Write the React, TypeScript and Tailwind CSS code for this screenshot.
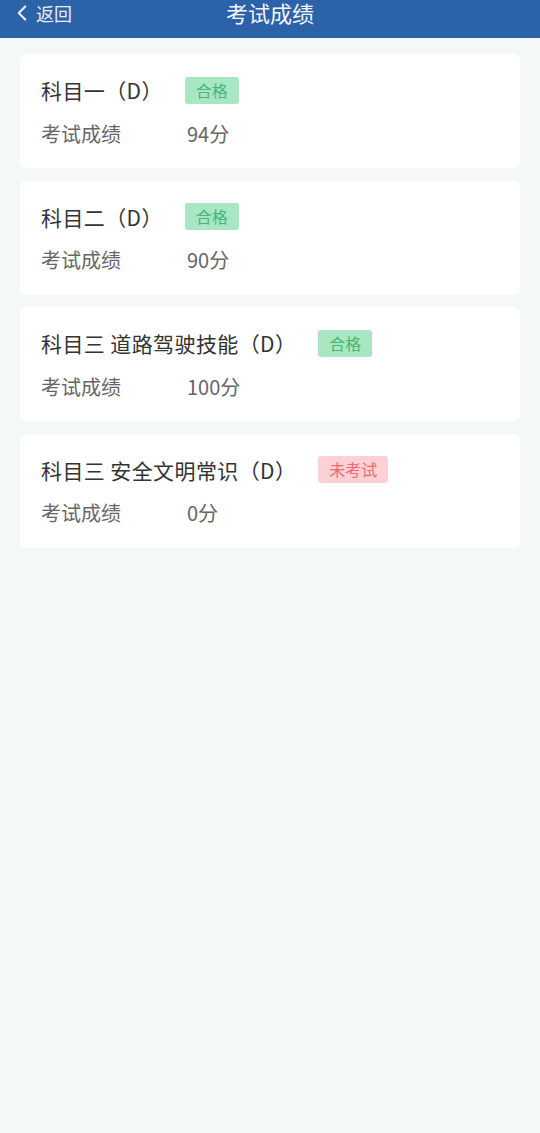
import { ChevronLeft } from 'lucide-react'

type Score = {
  name: string
  passed: boolean
  score: number
}

const scores: Score[] = [
  { name: '科目一（D）', passed: true, score: 94 },
  { name: '科目二（D）', passed: true, score: 90 },
  { name: '科目三 道路驾驶技能（D）', passed: true, score: 100 },
  { name: '科目三 安全文明常识（D）', passed: false, score: 0 },
]

const Header = () => {
  return (
    <header className="relative flex h-[38px] items-start justify-center bg-[#2c63a8] text-white">
      <button className="absolute left-[9px] top-0 flex items-center gap-[1px] text-[18px] leading-[24px] text-[#e8eef7]">
        <ChevronLeft className="h-[26px] w-[26px]" strokeWidth={2} />
        <span>返回</span>
      </button>
      <h1 className="text-[22px] leading-[24px] text-[#f2f5fa]">考试成绩</h1>
    </header>
  )
}

const ScoreCard = ({ item }: { item: Score }) => {
  return (
    <article className="flex h-[114px] flex-col justify-center gap-[18px] rounded-[6px] bg-white px-[21px]">
      <div className="flex items-center">
        <h2 className="text-[21px] leading-[26px] tracking-[0.4px] text-[#333]">{item.name}</h2>
        {item.passed ? (
          <span className="ml-[22px] rounded-[3px] bg-[#a9e6c2] px-[11px] py-[3px] text-[16px] leading-[21px] text-[#48b677]">
            合格
          </span>
        ) : (
          <span className="ml-[22px] rounded-[3px] bg-[#ffd1d4] px-[11px] py-[3px] text-[16px] leading-[21px] text-[#ee6a70]">
            未考试
          </span>
        )}
      </div>
      <div className="flex items-center text-[20px] leading-[24px] text-[#666]">
        <span className="w-[146px]">考试成绩</span>
        <span>{item.score}分</span>
      </div>
    </article>
  )
}

export default function App() {
  return (
    <div
      className="min-h-[1133px] w-[540px] bg-[#f4f8f9]"
      style={{ fontFamily: '"Noto Sans CJK SC", "Noto Sans", sans-serif' }}
    >
      <Header />
      <main className="flex flex-col gap-[12.67px] px-[20px] pt-[16px]">
        {scores.map((item) => (
          <ScoreCard key={item.name} item={item} />
        ))}
      </main>
    </div>
  )
}
